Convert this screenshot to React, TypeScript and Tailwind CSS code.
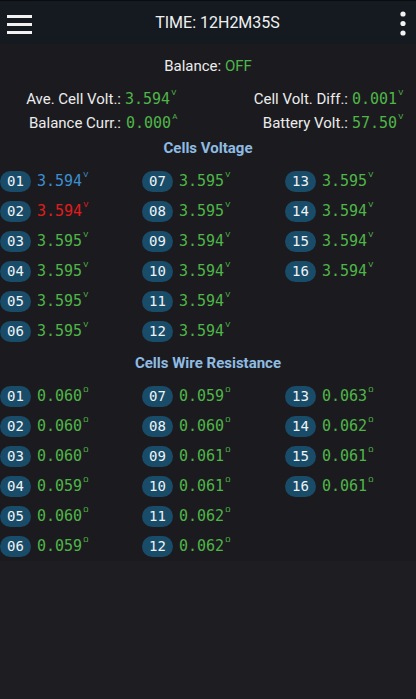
import React from "react";

const sans = { fontFamily: "Roboto, 'Noto Sans', sans-serif" };
const mono = { fontFamily: "'DejaVu Sans Mono', 'Liberation Mono', monospace" };

type Cell = { id: string; value: string; color?: string };

const volts: Cell[] = [
  { id: "01", value: "3.594", color: "text-[#3b8fd1]" },
  { id: "02", value: "3.594", color: "text-[#e21b1b]" },
  { id: "03", value: "3.595" },
  { id: "04", value: "3.595" },
  { id: "05", value: "3.595" },
  { id: "06", value: "3.595" },
  { id: "07", value: "3.595" },
  { id: "08", value: "3.595" },
  { id: "09", value: "3.594" },
  { id: "10", value: "3.594" },
  { id: "11", value: "3.594" },
  { id: "12", value: "3.594" },
  { id: "13", value: "3.595" },
  { id: "14", value: "3.594" },
  { id: "15", value: "3.594" },
  { id: "16", value: "3.594" },
];

const wires: Cell[] = [
  { id: "01", value: "0.060" },
  { id: "02", value: "0.060" },
  { id: "03", value: "0.060" },
  { id: "04", value: "0.059" },
  { id: "05", value: "0.060" },
  { id: "06", value: "0.059" },
  { id: "07", value: "0.059" },
  { id: "08", value: "0.060" },
  { id: "09", value: "0.061" },
  { id: "10", value: "0.061" },
  { id: "11", value: "0.062" },
  { id: "12", value: "0.062" },
  { id: "13", value: "0.063" },
  { id: "14", value: "0.062" },
  { id: "15", value: "0.061" },
  { id: "16", value: "0.061" },
];

function Value({ v, unit, color }: { v: string; unit: string; color?: string }) {
  return (
    <span className={`inline-flex items-start ${color ?? "text-[#4fb548]"}`}>
      <span className="text-[15px] leading-[20px]" style={mono}>{v}</span>
      <span className="text-[8px] leading-[10px] mt-[-1px] ml-[1px]" style={sans}>{unit}</span>
    </span>
  );
}

function CellItem({ c, unit }: { c: Cell; unit: string }) {
  return (
    <div className="flex items-center h-[30px]">
      <span
        className="w-[31px] h-[21px] rounded-full bg-[#194c69] text-[#eef3f6] text-[14px] flex items-center justify-center"
        style={mono}
      >
        {c.id}
      </span>
      <span className="ml-[6px]">
        <Value v={c.value} unit={unit} color={c.color} />
      </span>
    </div>
  );
}

function CellGrid({ cells, unit }: { cells: Cell[]; unit: string }) {
  const cols = [cells.slice(0, 6), cells.slice(6, 12), cells.slice(12, 16)];
  return (
    <div className="grid grid-cols-[142px_143px_131px]">
      {cols.map((col, i) => (
        <div key={i} className="flex flex-col">
          {col.map((c) => (
            <CellItem key={c.id} c={c} unit={unit} />
          ))}
        </div>
      ))}
    </div>
  );
}

export default function App() {
  return (
    <div className="w-[416px] h-[699px] bg-[#1e1e22] overflow-hidden flex flex-col" style={sans}>
      <header className="h-[44px] bg-[#141a20] border-t border-[#0a0d10] flex items-center justify-between relative">
        <svg width="40" height="40" viewBox="0 0 40 40" className="ml-[2px]">
          <rect x="5" y="12" width="25" height="3" fill="#f2f2f2" />
          <rect x="5" y="20" width="25" height="3" fill="#f2f2f2" />
          <rect x="5" y="28" width="25" height="3" fill="#f2f2f2" />
        </svg>
        <span className="text-[16px] text-[#f0f0f0]">TIME: 12H2M35S</span>
        <svg width="20" height="40" viewBox="0 0 20 40" className="mr-[3px]">
          <circle cx="10" cy="11" r="2.6" fill="#f2f2f2" />
          <circle cx="10" cy="20.5" r="2.6" fill="#f2f2f2" />
          <circle cx="10" cy="30" r="2.6" fill="#f2f2f2" />
        </svg>
      </header>

      <div className="bg-[#1b1b1f] flex flex-col">
        <div className="mt-[10px] h-[24px] flex items-center justify-center text-[15px] text-[#ececec]">
          Balance:&nbsp;<span className="text-[#4fb548]">OFF</span>
        </div>

        <div className="mt-[9px] grid grid-cols-[121px_87px_140px_68px] text-[15px] text-[#ececec]">
          <div className="h-[24px] flex items-center justify-end">Ave. Cell Volt.:</div>
          <div className="h-[24px] flex items-center pl-[4px]"><Value v="3.594" unit="V" /></div>
          <div className="h-[24px] flex items-center justify-end">Cell Volt. Diff.:</div>
          <div className="h-[24px] flex items-center pl-[4px]"><Value v="0.001" unit="V" /></div>
          <div className="h-[24px] flex items-center justify-end">Balance Curr.:</div>
          <div className="h-[24px] flex items-center pl-[5px]"><Value v="0.000" unit="A" /></div>
          <div className="h-[24px] flex items-center justify-end">Battery Volt.:</div>
          <div className="h-[24px] flex items-center pl-[4px]"><Value v="57.50" unit="V" /></div>
        </div>

        <div className="mt-[1px] h-[24px] flex items-center justify-center text-[15px] font-bold text-[#8fbbe3]">
          Cells Voltage
        </div>
        <div className="mt-[6px]">
          <CellGrid cells={volts} unit="V" />
        </div>

        <div className="mt-[5px] h-[24px] flex items-center justify-center text-[15px] font-bold text-[#8fbbe3]">
          Cells Wire Resistance
        </div>
        <div className="mt-[6px]">
          <CellGrid cells={wires} unit="Ω" />
        </div>
      </div>
    </div>
  );
}
